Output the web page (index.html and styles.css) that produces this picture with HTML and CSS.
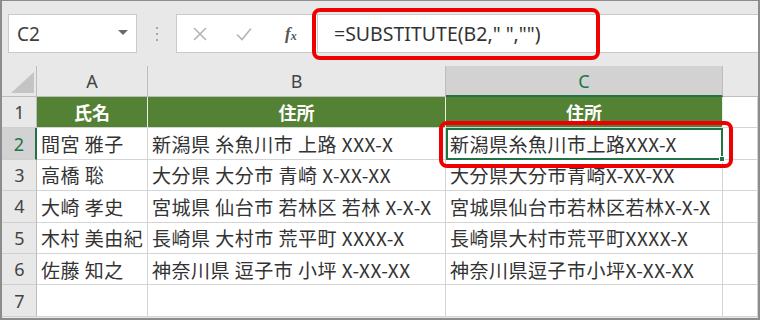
FILE: index.html
```html
<!DOCTYPE html>
<html lang="ja">
<head>
<meta charset="utf-8">
<link rel="stylesheet" href="styles.css">
</head>
<body>
<div class="frame">
  <div class="toolbar">
    <div class="namebox">
      <span class="nb-text">C2</span>
      <svg class="nb-arrow" width="10" height="6" viewBox="0 0 10 6"><path d="M0 0H10L5 5Z" fill="#6a6a6a"/></svg>
    </div>
    <div class="dots"><i></i><i></i><i></i></div>
    <div class="fbar">
      <div class="fbuttons">
        <svg class="btn" width="16" height="16" viewBox="0 0 16 16"><path d="M2 2L14 14M14 2L2 14" stroke="#b4b4b4" stroke-width="1.6" fill="none"/></svg>
        <svg class="btn" width="18" height="16" viewBox="0 0 18 16"><path d="M2 8.5L7 13.5L16 2.5" stroke="#b4b4b4" stroke-width="1.6" fill="none"/></svg>
        <span class="fx">f<sub>x</sub></span>
      </div>
      <div class="finput">=SUBSTITUTE(B2,&quot; &quot;,&quot;&quot;)</div>
    </div>
  </div>
  <div class="sheet">
    <div class="corner"><svg width="23" height="21" viewBox="0 0 23 21"><path d="M23 0V21H0Z" fill="#c4c4c4"/></svg></div>
    <div class="colh">A</div>
    <div class="colh">B</div>
    <div class="colh sel">C</div>
    <div class="colh last"></div>

    <div class="rowh">1</div>
    <div class="cell head">氏名</div>
    <div class="cell head">住所</div>
    <div class="cell head">住所</div>
    <div class="cell"></div>

    <div class="rowh sel">2</div>
    <div class="cell">間宮 雅子</div>
    <div class="cell">新潟県 糸魚川市 上路 XXX-X</div>
    <div class="cell active">新潟県糸魚川市上路XXX-X<span class="handle"></span></div>
    <div class="cell"></div>

    <div class="rowh">3</div>
    <div class="cell">高橋 聡</div>
    <div class="cell">大分県 大分市 青崎 X-XX-XX</div>
    <div class="cell">大分県大分市青崎X-XX-XX</div>
    <div class="cell"></div>

    <div class="rowh">4</div>
    <div class="cell">大崎 孝史</div>
    <div class="cell">宮城県 仙台市 若林区 若林 X-X-X</div>
    <div class="cell">宮城県仙台市若林区若林X-X-X</div>
    <div class="cell"></div>

    <div class="rowh">5</div>
    <div class="cell">木村 美由紀</div>
    <div class="cell">長崎県 大村市 荒平町 XXXX-X</div>
    <div class="cell">長崎県大村市荒平町XXXX-X</div>
    <div class="cell"></div>

    <div class="rowh">6</div>
    <div class="cell">佐藤 知之</div>
    <div class="cell">神奈川県 逗子市 小坪 X-XX-XX</div>
    <div class="cell">神奈川県逗子市小坪X-XX-XX</div>
    <div class="cell"></div>

    <div class="rowh">7</div>
    <div class="cell"></div>
    <div class="cell"></div>
    <div class="cell"></div>
    <div class="cell"></div>
  </div>
  <div class="hl hl-formula"></div>
  <div class="hl hl-cell"></div>
</div>
</body>
</html>
```

FILE: styles.css
```css
* { box-sizing: border-box; }
html, body { margin: 0; padding: 0; background: #fff; }
.frame {
  position: relative;
  width: 760px;
  height: 320px;
  border: 2px solid #8c8c8c;
  border-top-width: 1px;
  background: #e8e8e8;
  overflow: hidden;
  font-family: "Noto Sans CJK JP", "Noto Sans", sans-serif;
}
.toolbar {
  height: 65px;
  display: flex;
  align-items: flex-start;
  padding: 13px 0 0 6px;
}
.namebox {
  width: 129px;
  height: 39px;
  background: #fff;
  border: 1px solid #cacaca;
  display: flex;
  align-items: center;
  justify-content: space-between;
  padding: 0 8px 0 8px;
}
.nb-text {
  font-family: "Noto Sans", sans-serif;
  font-size: 19px;
  color: #404040;
}
.nb-arrow { margin-top: -1px; }
.dots {
  width: 39px;
  height: 39px;
  display: flex;
  flex-direction: column;
  align-items: center;
  justify-content: center;
  gap: 4px;
}
.dots i {
  display: block;
  width: 2px;
  height: 2px;
  background: #a8a8a8;
}
.fbar {
  flex: 1;
  height: 39px;
  background: #fff;
  border: 1px solid #cacaca;
  border-right: none;
  display: flex;
  align-items: center;
}
.fbuttons {
  width: 141px;
  height: 100%;
  display: flex;
  align-items: center;
  padding-left: 15px;
  gap: 27px;
  border-right: 1px solid #cacaca;
}
.fx {
  font-family: "Liberation Serif", serif;
  font-style: italic;
  font-weight: bold;
  font-size: 17px;
  color: #555;
  margin-left: 5px;
}
.fx sub { font-size: 12px; vertical-align: -1px; }
.finput {
  padding-left: 16px;
  font-family: "Noto Sans", sans-serif;
  font-size: 19.5px;
  color: #333;
  white-space: pre;
}
.sheet {
  display: grid;
  grid-template-columns: 35px 111px 298px 277px 1fr;
  grid-template-rows: 31px repeat(7, 31.4px);
}
.corner {
  border-right: 1px solid #bdbdbd;
  border-bottom: 1px solid #bdbdbd;
  display: flex;
  align-items: flex-end;
  justify-content: flex-end;
  padding: 0 2px 3px 0;
}
.colh {
  display: flex;
  align-items: center;
  justify-content: center;
  font-family: "Noto Sans", sans-serif;
  font-size: 18px;
  color: #444;
  border-right: 1px solid #bdbdbd;
  border-bottom: 1px solid #bdbdbd;
}
.colh.sel {
  background: #d2d2d2;
  color: #217346;
  border-bottom: 2px solid #217346;
}
.colh.last { border-right: none; }
.rowh {
  display: flex;
  align-items: center;
  justify-content: center;
  font-family: "Noto Sans", sans-serif;
  font-size: 18px;
  color: #444;
  border-right: 1px solid #bdbdbd;
  border-bottom: 1px solid #cfcfcf;
  padding-left: 1px;
}
.rowh.sel {
  background: #d2d2d2;
  color: #217346;
  border-right: 2px solid #217346;
}
.cell {
  position: relative;
  background: #fff;
  border-right: 1px solid #d4d4d4;
  border-bottom: 1px solid #d4d4d4;
  font-size: 19px;
  letter-spacing: 0.5px;
  color: #333;
  display: flex;
  align-items: center;
  padding-left: 4px;
  white-space: nowrap;
  overflow: visible;
}
.cell.head {
  background: #548235;
  color: #fff;
  font-weight: bold;
  font-size: 18px;
  letter-spacing: 0;
  justify-content: center;
  border-right-color: #e9efe4;
  padding-left: 0;
}
.cell.active {
  outline: 2px solid #217346;
  outline-offset: -2px;
  z-index: 1;
}
.handle {
  position: absolute;
  right: -3px;
  bottom: -3px;
  width: 6px;
  height: 6px;
  background: #217346;
  border: 1px solid #fff;
}
.hl {
  position: absolute;
  border: 4px solid #ee0000;
  border-radius: 8px;
  z-index: 5;
}
.hl-formula { left: 310px; top: 7px; width: 288px; height: 52px; }
.hl-cell { left: 437px; top: 120px; width: 294px; height: 47px; }
```
